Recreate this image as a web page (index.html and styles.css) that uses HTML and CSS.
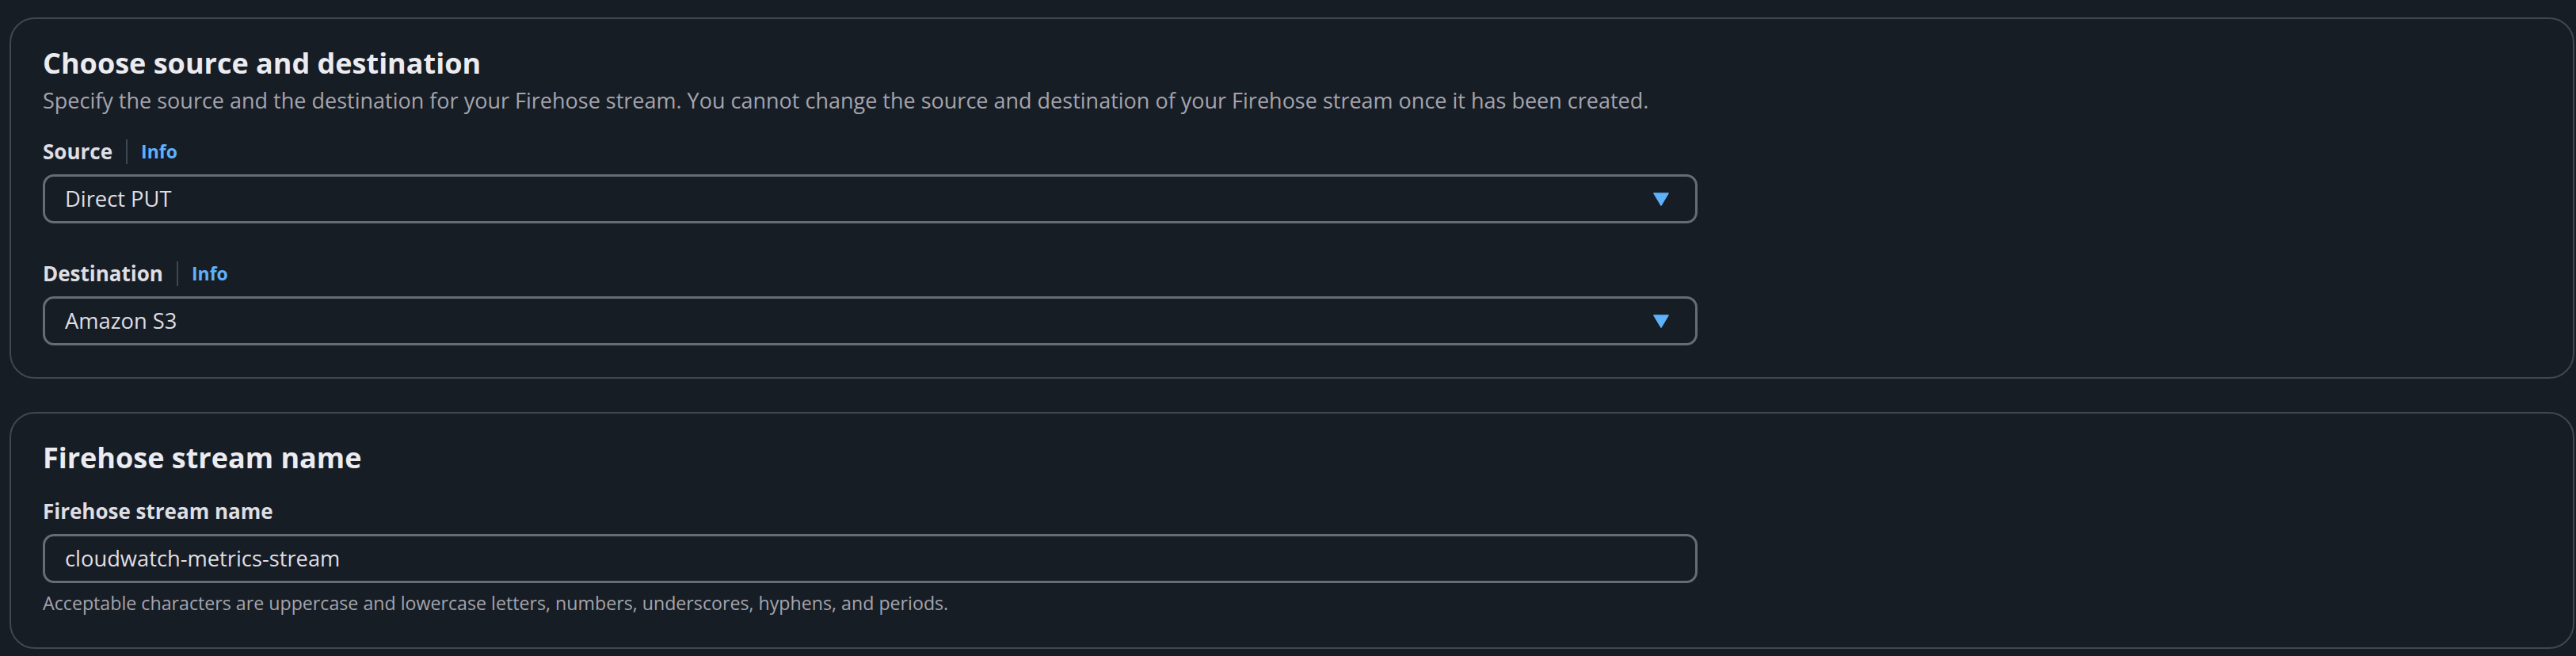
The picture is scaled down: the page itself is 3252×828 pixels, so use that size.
FILE: index.html
```html
<!DOCTYPE html>
<html lang="en">
<head>
<meta charset="utf-8">
<title>Choose source and destination</title>
<link rel="stylesheet" href="styles.css">
</head>
<body>
<main class="page">
  <section class="panel">
    <header class="panel-header with-desc">
      <h2 class="panel-title">Choose source and destination</h2>
      <p class="panel-desc">Specify the source and the destination for your Firehose stream. You cannot change the source and destination of your Firehose stream once it has been created.</p>
    </header>
    <div class="fields">
      <div class="field">
        <div class="label-row">
          <span class="label">Source</span>
          <span class="sep"></span>
          <a class="info" href="#">Info</a>
        </div>
        <div class="control select">
          <span class="value">Direct PUT</span>
          <svg class="caret" viewBox="0 0 20 17" width="20" height="17"><path d="M1 1 H19 L10 16 Z" fill="#5eb1fb" stroke="#5eb1fb" stroke-width="1.5" stroke-linejoin="round"/></svg>
        </div>
      </div>
      <div class="field">
        <div class="label-row">
          <span class="label">Destination</span>
          <span class="sep"></span>
          <a class="info" href="#">Info</a>
        </div>
        <div class="control select">
          <span class="value">Amazon S3</span>
          <svg class="caret" viewBox="0 0 20 17" width="20" height="17"><path d="M1 1 H19 L10 16 Z" fill="#5eb1fb" stroke="#5eb1fb" stroke-width="1.5" stroke-linejoin="round"/></svg>
        </div>
      </div>
    </div>
  </section>
  <section class="panel">
    <header class="panel-header">
      <h2 class="panel-title">Firehose stream name</h2>
    </header>
    <div class="fields">
      <div class="field">
        <div class="label-row">
          <span class="label">Firehose stream name</span>
        </div>
        <div class="control input">
          <span class="value">cloudwatch-metrics-stream</span>
        </div>
        <p class="constraint">Acceptable characters are uppercase and lowercase letters, numbers, underscores, hyphens, and periods.</p>
      </div>
    </div>
  </section>
</main>
</body>
</html>
```

FILE: styles.css
```css
html, body {
  margin: 0;
  padding: 0;
  background: #171d25;
}

body {
  font-family: "Open Sans", "Noto Sans", sans-serif;
  color: #dedee3;
}

.page {
  display: flex;
  flex-direction: column;
  gap: 42px;
  padding: 22px 2px 10px 12px;
}

.panel {
  border: 2px solid #414751;
  border-radius: 32px;
  padding: 35px 40px 40px 40px;
  background: #171d25;
}

.panel-header {
  margin-bottom: 27px;
}

.panel-header.with-desc {
  margin-bottom: 26px;
}

.panel-title {
  margin: 0;
  font-size: 36px;
  line-height: 42px;
  font-weight: 700;
  color: #ebebf0;
}

.panel-desc {
  margin: 7px 0 0 0;
  font-size: 27px;
  line-height: 38px;
  color: #a4a4ad;
}

.fields {
  display: flex;
  flex-direction: column;
  gap: 44px;
}

.field {
  width: 2089px;
}

.label-row {
  display: flex;
  align-items: center;
  height: 38px;
  margin-bottom: 10px;
}

.label {
  font-size: 26px;
  line-height: 38px;
  font-weight: 700;
  color: #dedee3;
}

.sep {
  width: 2px;
  height: 31px;
  margin: 0 17px;
  background: #414751;
}

.info {
  font-size: 23px;
  line-height: 38px;
  font-weight: 700;
  color: #5eb1fb;
  text-decoration: none;
}

.control {
  box-sizing: border-box;
  height: 62px;
  border: 3px solid #686b73;
  border-radius: 14px;
  display: flex;
  align-items: center;
  justify-content: space-between;
  padding: 0 33px 0 25px;
}

.value {
  font-size: 27.3px;
  line-height: 38px;
  color: #dedee3;
}

.caret {
  display: block;
}

.constraint {
  margin: 9px 0 0 0;
  font-size: 23.2px;
  line-height: 32px;
  color: #a4a4ad;
}
```
